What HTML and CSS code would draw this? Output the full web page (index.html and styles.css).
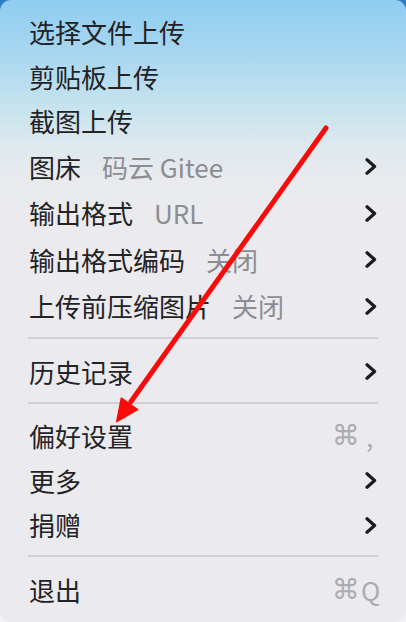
FILE: index.html
```html
<!DOCTYPE html>
<html lang="zh-CN">
<head>
<meta charset="utf-8">
<title>Menu</title>
<link rel="stylesheet" href="styles.css">
</head>
<body>
<div class="menu">
  <div class="row r-a"><span class="label">选择文件上传</span></div>
  <div class="row r-a"><span class="label">剪贴板上传</span></div>
  <div class="row r-a"><span class="label">截图上传</span></div>
  <div class="row r-b"><span class="label">图床</span><span class="sub">码云 Gitee</span><svg class="chev" viewBox="0 0 12 17"><path d="M2 1.8 L9.6 8.5 L2 15.2"/></svg></div>
  <div class="row r-b"><span class="label">输出格式</span><span class="sub">URL</span><svg class="chev" viewBox="0 0 12 17"><path d="M2 1.8 L9.6 8.5 L2 15.2"/></svg></div>
  <div class="row r-b"><span class="label">输出格式编码</span><span class="sub">关闭</span><svg class="chev" viewBox="0 0 12 17"><path d="M2 1.8 L9.6 8.5 L2 15.2"/></svg></div>
  <div class="row r-b"><span class="label">上传前压缩图片</span><span class="sub">关闭</span><svg class="chev" viewBox="0 0 12 17"><path d="M2 1.8 L9.6 8.5 L2 15.2"/></svg></div>
  <div class="sep"></div>
  <div class="row r-b"><span class="label">历史记录</span><svg class="chev" viewBox="0 0 12 17"><path d="M2 1.8 L9.6 8.5 L2 15.2"/></svg></div>
  <div class="sep"></div>
  <div class="row r-a"><span class="label">偏好设置</span><span class="key"><span class="cmd">⌘</span><span class="comma">,</span></span></div>
  <div class="row r-a"><span class="label">更多</span><svg class="chev" viewBox="0 0 12 17"><path d="M2 1.8 L9.6 8.5 L2 15.2"/></svg></div>
  <div class="row r-a"><span class="label">捐赠</span><svg class="chev" viewBox="0 0 12 17"><path d="M2 1.8 L9.6 8.5 L2 15.2"/></svg></div>
  <div class="sep"></div>
  <div class="row r-b"><span class="label">退出</span><span class="key"><span class="cmd">⌘</span>Q</span></div>
</div>
<svg class="arrow" viewBox="0 0 406 622" width="406" height="622">
  <line x1="326" y1="128" x2="131" y2="401.5" stroke="#fa0a0a" stroke-width="5" stroke-linecap="round"/>
  <polygon points="116.7,421.7 121.4,398 137.6,409.6" fill="#fa0a0a" stroke="#fa0a0a" stroke-width="1.5" stroke-linejoin="round"/>
</svg>
</body>
</html>
```
FILE: styles.css
```css
html, body {
  margin: 0;
  padding: 0;
}
body {
  width: 406px;
  height: 622px;
  overflow: hidden;
  position: relative;
  background: linear-gradient(180deg, #2f7cc6 0px, #2f7cc6 30px, #f3f3f5 590px);
  font-family: "Noto Sans CJK SC", "Noto Sans", sans-serif;
}
.menu {
  box-sizing: border-box;
  width: 406px;
  height: 622px;
  border-radius: 11px;
  padding: 10px 28px 0 29px;
  background: linear-gradient(180deg, #8fcdf1 0px, #a6d6f0 50px, #c8e4ef 110px, #dde9ee 145px, #e8eaee 175px, #ebebef 220px, #ebebef 100%);
  display: flex;
  flex-direction: column;
}
.row {
  display: flex;
  align-items: center;
  font-size: 26px;
  line-height: 1;
  color: #232325;
}
.r-a { height: 44.5px; }
.r-b { height: 46.5px; }
.label {
  white-space: nowrap;
}
.sub {
  margin-left: 21px;
  color: #8d8d91;
  white-space: nowrap;
}
.chev {
  margin-left: auto;
  margin-right: 1px;
  width: 12px;
  height: 17px;
  fill: none;
  stroke: #1c1c1e;
  stroke-width: 3.2;
  stroke-linecap: round;
  stroke-linejoin: round;
}
.key {
  margin-left: auto;
  color: #acacb0;
  white-space: nowrap;
  width: 46px;
  display: flex;
  align-items: center;
}
.cmd {
  font-family: "DejaVu Sans", "Noto Sans CJK SC", sans-serif;
  font-size: 28px;
  margin-right: 1px;
}
.comma {
  margin-left: 5px;
}
.sep {
  height: 2px;
  margin: 7px 0 10px -1px;
  background: #d1d1d5;
  flex: none;
}
.arrow {
  position: absolute;
  left: 0;
  top: 0;
  pointer-events: none;
}
```
